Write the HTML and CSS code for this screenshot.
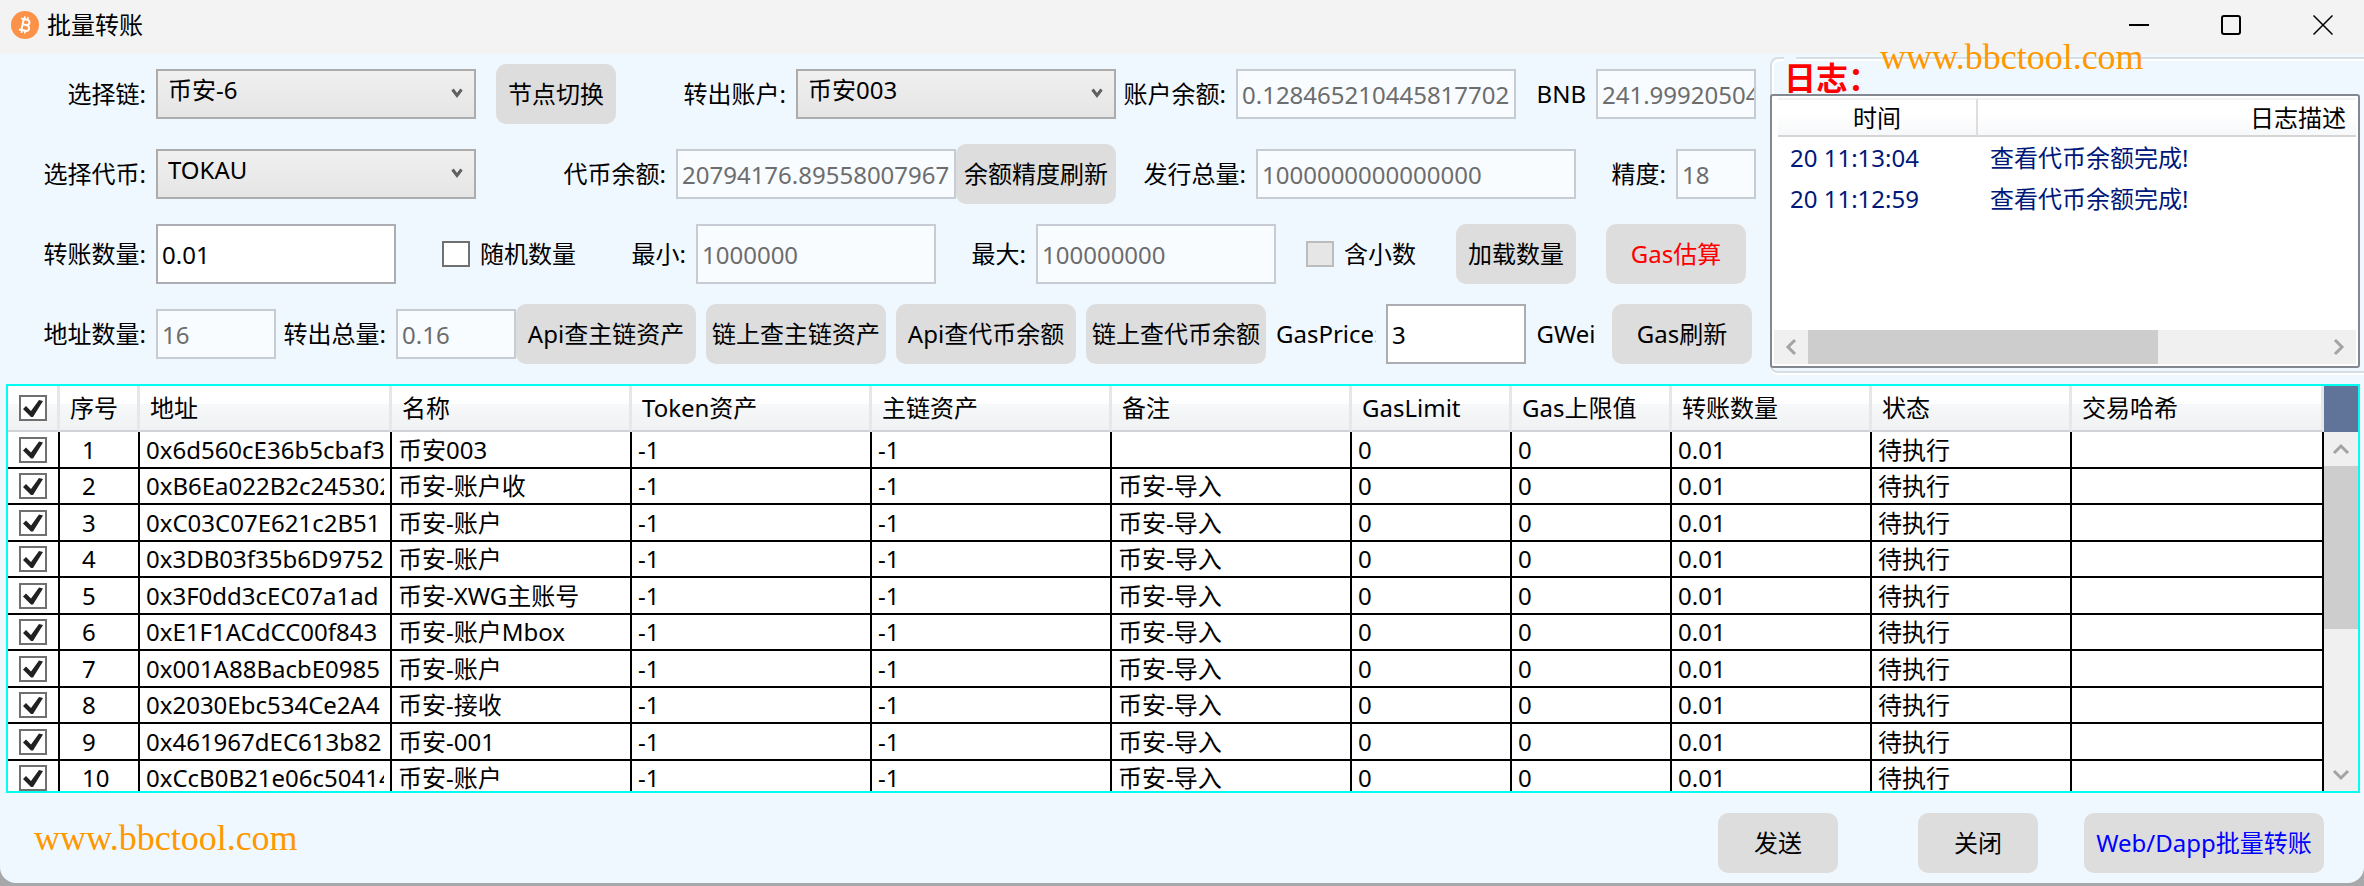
FILE: index.html
```html
<!DOCTYPE html>
<html lang="zh-CN">
<head>
<meta charset="utf-8">
<title>批量转账</title>
<link rel="stylesheet" href="styles.css">
</head>
<body>
<div class="window">
  <header class="titlebar">
    <svg class="coin" viewBox="0 0 28 28" aria-hidden="true">
      <circle cx="14" cy="14" r="14" fill="#fb9248"/>
      <g transform="rotate(12 14 14)" fill="none" stroke="#fff" stroke-width="2">
        <path d="M9 8.500h6.200a2.600 2.600 0 0 1 0 5.300H12M15 13.800h.8a2.900 2.900 0 0 1 0 5.800H9M11.500 8.500v11"/>
        <path d="M12.200 5.500v3M15.400 5.500v3M12.200 19.500v3M15.400 19.500v3" stroke-width="1.600"/>
      </g>
    </svg>
    <h1 class="title">批量转账</h1>
    <div class="window-buttons">
      <button class="window-button" type="button" aria-label="最小化"><svg viewBox="0 0 20 20"><path d="M0 10h20"/></svg></button>
      <button class="window-button" type="button" aria-label="最大化"><svg viewBox="0 0 20 20"><rect x="1" y="1" width="18" height="18" rx="2"/></svg></button>
      <button class="window-button" type="button" aria-label="关闭窗口"><svg viewBox="0 0 20 20"><path class="thin" d="M.5.5l19 19M19.500.5l-19 19"/></svg></button>
    </div>
  </header>

  <main class="top">
    <form class="settings">
      <div class="row row-chain">
        <label class="label" for="chain">选择链:</label>
        <div class="combo"><select id="chain"><option>币安-6</option></select><svg class="chevron" viewBox="0 0 12 10"><path d="M1.500 1.500L6 7.500l4.500-6"/></svg></div>
        <button class="btn btn-node" type="button">节点切换</button>
        <label class="label" for="account">转出账户:</label>
        <div class="combo"><select id="account"><option>币安003</option></select><svg class="chevron" viewBox="0 0 12 10"><path d="M1.500 1.500L6 7.500l4.500-6"/></svg></div>
        <label class="label" for="balance">账户余额:</label>
        <input class="field" id="balance" value="0.128465210445817702" disabled>
        <label class="label" for="bnb">BNB</label>
        <input class="field" id="bnb" value="241.99920504" disabled>
      </div>
      <div class="row row-token">
        <label class="label" for="token">选择代币:</label>
        <div class="combo"><select id="token"><option>TOKAU</option></select><svg class="chevron" viewBox="0 0 12 10"><path d="M1.500 1.500L6 7.500l4.500-6"/></svg></div>
        <label class="label" for="token-balance">代币余额:</label>
        <div class="joined joined-balance">
          <input class="field" id="token-balance" value="20794176.89558007967" disabled>
          <button class="btn" type="button">余额精度刷新</button>
        </div>
        <label class="label" for="supply">发行总量:</label>
        <input class="field" id="supply" value="1000000000000000" disabled>
        <label class="label" for="decimals">精度:</label>
        <input class="field" id="decimals" value="18" disabled>
      </div>
      <div class="row row-amount">
        <label class="label" for="amount">转账数量:</label>
        <input class="field tall" id="amount" value="0.01">
        <label class="check-label random"><input class="check" type="checkbox">随机数量</label>
        <label class="label" for="min">最小:</label>
        <input class="field tall" id="min" value="1000000" disabled>
        <label class="label" for="max">最大:</label>
        <input class="field tall" id="max" value="100000000" disabled>
        <label class="check-label decimal"><input class="check" type="checkbox" disabled>含小数</label>
        <button class="btn btn-load" type="button">加载数量</button>
        <button class="btn btn-estimate" type="button">Gas估算</button>
      </div>
      <div class="row row-query">
        <label class="label" for="count">地址数量:</label>
        <input class="field" id="count" value="16" disabled>
        <label class="label" for="total">转出总量:</label>
        <div class="joined joined-total">
          <input class="field" id="total" value="0.16" disabled>
          <button class="btn" type="button">Api查主链资产</button>
        </div>
        <button class="btn" type="button">链上查主链资产</button>
        <button class="btn" type="button">Api查代币余额</button>
        <button class="btn" type="button">链上查代币余额</button>
        <label class="label clipped" for="gas-price">GasPrice:</label>
        <input class="field tall" id="gas-price" value="3">
        <span class="label unit">GWei</span>
        <button class="btn btn-gas" type="button">Gas刷新</button>
      </div>
    </form>

    <section class="log">
      <h2 class="log-title">日志：</h2>
      <p class="watermark watermark-top">www.bbctool.com</p>
      <div class="log-view">
        <div class="log-scroll">
          <table class="log-table">
            <colgroup><col class="log-time"><col></colgroup>
            <thead><tr><th>时间</th><th>日志描述</th></tr></thead>
            <tbody>
              <tr><td>20 11:13:04</td><td>查看代币余额完成!</td></tr>
              <tr><td>20 11:12:59</td><td>查看代币余额完成!</td></tr>
            </tbody>
          </table>
        </div>
        <div class="hbar">
          <svg class="arrow" viewBox="0 0 34 34"><path d="M21 10l-7 7 7 7"/></svg>
          <div class="htrack"><div class="hthumb"></div></div>
          <svg class="arrow" viewBox="0 0 34 34"><path d="M13 10l7 7-7 7"/></svg>
        </div>
      </div>
    </section>
  </main>

  <section class="grid">
    <div class="grid-body">
      <table class="data">
        <colgroup>
          <col class="w-check"><col class="w-index"><col class="w-address"><col class="w-240"><col class="w-240"><col class="w-240"><col class="w-240"><col class="w-160"><col class="w-160"><col class="w-200"><col class="w-200"><col class="w-address">
        </colgroup>
        <thead>
          <tr><th><input class="check" type="checkbox" checked aria-label="全选"></th><th>序号</th><th>地址</th><th>名称</th><th>Token资产</th><th>主链资产</th><th>备注</th><th>GasLimit</th><th>Gas上限值</th><th>转账数量</th><th>状态</th><th>交易哈希</th></tr>
        </thead>
        <tbody>
          <tr><td><input class="check" type="checkbox" checked aria-label="1"></td><td>1</td><td><span class="clip">0x6d560cE36b5cbaf3</span></td><td>币安003</td><td>-1</td><td>-1</td><td></td><td>0</td><td>0</td><td>0.01</td><td>待执行</td><td></td></tr>
          <tr><td><input class="check" type="checkbox" checked aria-label="2"></td><td>2</td><td><span class="clip">0xB6Ea022B2c245302</span></td><td>币安-账户收</td><td>-1</td><td>-1</td><td>币安-导入</td><td>0</td><td>0</td><td>0.01</td><td>待执行</td><td></td></tr>
          <tr><td><input class="check" type="checkbox" checked aria-label="3"></td><td>3</td><td><span class="clip">0xC03C07E621c2B51</span></td><td>币安-账户</td><td>-1</td><td>-1</td><td>币安-导入</td><td>0</td><td>0</td><td>0.01</td><td>待执行</td><td></td></tr>
          <tr><td><input class="check" type="checkbox" checked aria-label="4"></td><td>4</td><td><span class="clip">0x3DB03f35b6D9752</span></td><td>币安-账户</td><td>-1</td><td>-1</td><td>币安-导入</td><td>0</td><td>0</td><td>0.01</td><td>待执行</td><td></td></tr>
          <tr><td><input class="check" type="checkbox" checked aria-label="5"></td><td>5</td><td><span class="clip">0x3F0dd3cEC07a1ad</span></td><td>币安-XWG主账号</td><td>-1</td><td>-1</td><td>币安-导入</td><td>0</td><td>0</td><td>0.01</td><td>待执行</td><td></td></tr>
          <tr><td><input class="check" type="checkbox" checked aria-label="6"></td><td>6</td><td><span class="clip">0xE1F1ACdCC00f843</span></td><td>币安-账户Mbox</td><td>-1</td><td>-1</td><td>币安-导入</td><td>0</td><td>0</td><td>0.01</td><td>待执行</td><td></td></tr>
          <tr><td><input class="check" type="checkbox" checked aria-label="7"></td><td>7</td><td><span class="clip">0x001A88BacbE0985</span></td><td>币安-账户</td><td>-1</td><td>-1</td><td>币安-导入</td><td>0</td><td>0</td><td>0.01</td><td>待执行</td><td></td></tr>
          <tr><td><input class="check" type="checkbox" checked aria-label="8"></td><td>8</td><td><span class="clip">0x2030Ebc534Ce2A4</span></td><td>币安-接收</td><td>-1</td><td>-1</td><td>币安-导入</td><td>0</td><td>0</td><td>0.01</td><td>待执行</td><td></td></tr>
          <tr><td><input class="check" type="checkbox" checked aria-label="9"></td><td>9</td><td><span class="clip">0x461967dEC613b82</span></td><td>币安-001</td><td>-1</td><td>-1</td><td>币安-导入</td><td>0</td><td>0</td><td>0.01</td><td>待执行</td><td></td></tr>
          <tr><td><input class="check" type="checkbox" checked aria-label="10"></td><td>10</td><td><span class="clip">0xCcB0B21e06c50414</span></td><td>币安-账户</td><td>-1</td><td>-1</td><td>币安-导入</td><td>0</td><td>0</td><td>0.01</td><td>待执行</td><td></td></tr>
        </tbody>
      </table>
    </div>
    <div class="vbar">
      <div class="corner"></div>
      <svg class="arrow" viewBox="0 0 34 34"><path d="M10 21l7-7 7 7"/></svg>
      <div class="vtrack"><div class="vthumb"></div></div>
      <svg class="arrow" viewBox="0 0 34 34"><path d="M10 14l7 7 7-7"/></svg>
    </div>
  </section>

  <footer class="footer">
    <p class="watermark">www.bbctool.com</p>
    <div class="actions">
      <button class="btn btn-send" type="button">发送</button>
      <button class="btn btn-close" type="button">关闭</button>
      <button class="btn btn-web" type="button">Web/Dapp批量转账</button>
    </div>
  </footer>
</div>
</body>
</html>
```

FILE: styles.css
```css
* {
  box-sizing: border-box;
}

body {
  margin: 0;
  background: #a6a8aa;
  color: #000;
  font-family: "Noto Sans", "Noto Sans CJK SC", sans-serif;
  font-size: 24px;
  line-height: 32px;
}

button,
input,
select {
  margin: 0;
  min-width: 0;
  color: inherit;
  font: inherit;
}

h1,
h2,
p {
  margin: 0;
}

.window {
  display: flex;
  flex-direction: column;
  height: calc(100vh - 3px);
  overflow: hidden;
  border-radius: 0 0 16px 16px;
  background: #f0f8ff;
}

/* Title bar */
.titlebar {
  display: flex;
  flex: none;
  align-items: center;
  height: 54px;
  padding: 0 0 4px 11px;
  background: #f3f3f3;
}

.coin {
  width: 28px;
  height: 28px;
  margin-right: 8px;
}

.title {
  font-size: 24px;
  font-weight: 400;
}

.window-buttons {
  display: flex;
  gap: 10px;
  margin-left: auto;
}

.window-button {
  display: grid;
  place-items: center;
  width: 82px;
  height: 50px;
  padding: 0;
  border: 0;
  background: none;
}

.window-button svg {
  width: 20px;
  height: 20px;
  fill: none;
  stroke: #000;
  stroke-width: 2;
}

.window-button .thin {
  stroke-width: 1.5;
}

/* Settings form */
.top {
  display: grid;
  flex: none;
  grid-template-columns: 1770fr 594fr;
  align-items: start;
}

.settings {
  display: flex;
  flex-direction: column;
  gap: 20px;
  min-width: 0;
  padding: 10px 14px 20px 0;
}

.row {
  display: grid;
  align-items: center;
  column-gap: 10px;
  height: 60px;
}

.row-chain {
  grid-template-columns: 146fr 320fr 130fr 160fr 320fr 100fr 280fr 60fr 160fr;
}

.row-token {
  grid-template-columns: 146fr 320fr 180fr 440fr 120fr 320fr 80fr 80fr;
}

.row-amount {
  grid-template-columns: 146fr 240fr 170fr 100fr 240fr 80fr 240fr 130fr 150fr 170fr;
}

.row-query {
  grid-template-columns: 146fr 120fr 100fr 300fr 180fr 180fr 180fr 100fr 140fr 60fr 150fr;
}

.row > * {
  min-width: 0;
}

.label {
  display: flex;
  justify-content: flex-end;
  white-space: nowrap;
}

.clipped {
  justify-content: flex-start;
  overflow: hidden;
}

.unit {
  justify-content: center;
}

.field {
  width: 100%;
  height: 50px;
  padding: 0 0 0 4px;
  border: 2px solid #abadb3;
  border-radius: 0;
  background: #fff;
}

.field:disabled {
  border-color: #c7cbd3;
  background: #f9fcff;
  color: #6d6d6d;
}

.field.tall {
  height: 60px;
}

.combo {
  display: flex;
  position: relative;
}

.combo select {
  width: 100%;
  height: 50px;
  padding: 0 32px 8px 10px;
  border: 2px solid #acacac;
  border-radius: 0;
  appearance: none;
  background: linear-gradient(#f0f0f0, #e5e5e5);
}

.chevron {
  position: absolute;
  top: 19px;
  right: 13px;
  width: 12px;
  height: 10px;
  fill: none;
  stroke: #606060;
  stroke-width: 3;
  pointer-events: none;
}

.btn {
  height: 60px;
  padding: 0;
  border: 0;
  border-radius: 10px;
  background: #ddd;
  text-align: center;
  white-space: nowrap;
}

.btn-node {
  margin-left: 10px;
}

.btn-load {
  margin-left: 30px;
}

.btn-estimate {
  margin: 0 10px 0 20px;
  color: #f00;
}

.btn-gas {
  margin: 0 4px 0 6px;
}

.joined {
  display: grid;
  align-items: center;
}

.joined-balance {
  grid-template-columns: 280fr 160fr;
}

.joined-total {
  grid-template-columns: 120fr 180fr;
}

.check-label {
  display: flex;
  align-items: center;
  gap: 10px;
  white-space: nowrap;
}

.random {
  padding-left: 36px;
}

.decimal {
  padding-left: 20px;
}

.check {
  display: block;
  flex: none;
  width: 28px;
  height: 26px;
  border: 2px solid #707070;
  appearance: none;
  background: #fff;
}

.check:disabled {
  border-color: #bcbcbc;
  background: #e6e6e6;
}

.check:checked::before {
  display: block;
  width: 24px;
  height: 22px;
  background: #212121;
  clip-path: polygon(2px 12px, 5px 9px, 10px 14px, 18px 3px, 22px 4px, 12px 20px, 10px 20px);
  content: "";
}

/* Log panel */
.log {
  position: relative;
  min-width: 0;
  margin-top: 3px;
  padding-bottom: 3px;
  border: 2px solid #d5dfe5;
  border-right: 0;
  border-radius: 8px 0 0 8px;
  box-shadow: inset 2px 2px #fff, 0 2px #fff;
}

.log-title {
  height: 35px;
  padding-left: 12px;
  color: #f00;
  font-family: "Noto Sans CJK SC", sans-serif;
  font-size: 32px;
  line-height: 35px;
}

/* Break in the frame above the heading */
.log-title::before {
  position: absolute;
  top: -2px;
  left: 12px;
  width: 12px;
  height: 4px;
  background: #f0f8ff;
  content: "";
}

.watermark {
  color: #ff9800;
  font-family: "Liberation Serif", serif;
  font-size: 36px;
  line-height: 40px;
}

.watermark-top {
  position: absolute;
  top: -22px;
  left: 108px;
}

.log-view {
  display: flex;
  flex-direction: column;
  height: 274px;
  margin: 0 4px 0 -2px;
  padding: 2px;
  border: 2px solid #828790;
  border-radius: 3px;
  background: #fff;
}

.log-scroll {
  flex: 1;
  min-height: 0;
  overflow: hidden;
  padding-left: 4px;
}

.log-table {
  width: 842px;
  border-collapse: separate;
  border-spacing: 0;
  table-layout: fixed;
  color: #00187a;
}

.log-time {
  width: 200px;
}

.log-table th {
  height: 39px;
  padding: 0;
  border-top: 2px solid #f2f2f2;
  border-right: 2px solid #dedede;
  border-bottom: 2px solid #d5d5d5;
  background: linear-gradient(#fff 40%, #f7f8fa);
  color: #000;
  font-weight: 400;
  text-align: center;
}

.log-table td {
  height: 41px;
  padding: 0 12px;
  white-space: nowrap;
}

.hbar {
  display: flex;
  flex: none;
  height: 34px;
  background: #f0f0f0;
}

.htrack {
  flex: 1;
}

.hthumb {
  width: 68%;
  height: 100%;
  background: #cdcdcd;
}

.arrow {
  display: block;
  flex: none;
  width: 34px;
  height: 34px;
  fill: none;
  stroke: #a3a3a3;
  stroke-width: 3;
}

/* Address grid */
.grid {
  display: flex;
  flex: 1;
  min-height: 0;
  margin: 0 4px 0 6px;
  border: 2px solid #00fff0;
  background: #fff;
}

.grid-body {
  flex: 1;
  min-width: 0;
  overflow: hidden;
}

.data {
  width: 100%;
  border-collapse: separate;
  border-spacing: 0;
  table-layout: fixed;
}

.w-check {
  width: 52px;
}

.w-index {
  width: 80px;
}

.w-address {
  width: 252px;
}

.w-240 {
  width: 240px;
}

.w-160 {
  width: 160px;
}

.w-200 {
  width: 200px;
}

.data th {
  height: 46px;
  padding: 0 0 0 10px;
  border-right: 3px solid #e6e7e8;
  border-bottom: 2px solid #cfd3d8;
  background: linear-gradient(#fff 40%, #f7f8fa 42%, #f0f1f3);
  font-weight: 400;
  text-align: left;
  white-space: nowrap;
}

.data td {
  height: 36px;
  padding: 0 6px;
  border-right: 2px solid #000;
  border-bottom: 2px solid #000;
  line-height: 34px;
  white-space: nowrap;
}

.data tr:nth-child(odd) td {
  height: 37px;
}

.data th:first-child,
.data td:first-child {
  padding: 0 0 0 11px;
}

.data td:nth-child(2) {
  padding-left: 22px;
}

.clip {
  display: block;
  overflow: hidden;
}

.vbar {
  display: flex;
  flex: none;
  flex-direction: column;
  width: 34px;
  background: #f0f0f0;
}

.corner {
  flex: none;
  height: 46px;
  background: #607499;
}

.vtrack {
  flex: 1;
}

.vthumb {
  height: 56%;
  background: #cdcdcd;
}

/* Footer */
.footer {
  display: flex;
  flex: none;
  align-items: center;
  justify-content: space-between;
  height: 90px;
  padding: 0 40px 0 34px;
}

.actions {
  display: flex;
  padding-top: 10px;
}

.btn-send,
.btn-close {
  width: 120px;
}

.btn-close {
  margin: 0 46px 0 80px;
}

.btn-web {
  width: 240px;
  color: #00f;
}
```
